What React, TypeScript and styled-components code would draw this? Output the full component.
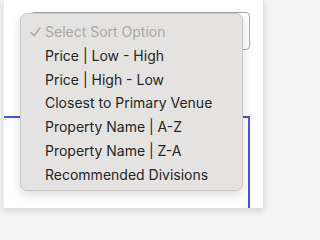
import styled, { createGlobalStyle } from 'styled-components';

const GlobalStyle = createGlobalStyle`
	html, body {
		margin: 0;
		padding: 0;
		background: #f3f3f3;
		font-family: 'Inter', 'Liberation Sans', sans-serif;
	}
	#root {
		width: 270px;
		height: 217px;
		overflow: hidden;
	}
`;

const options = [
	'Price | Low - High',
	'Price | High - Low',
	'Closest to Primary Venue',
	'Property Name | A-Z',
	'Property Name | Z-A',
	'Recommended Divisions',
];

const App = () => {
	return (
		<>
			<GlobalStyle />
			<Card>
				<SelectBox />
				<ResultsPanel />
				<Menu>
					<MenuItem disabled>
						<Check width='11' height='10' viewBox='0 0 11 10'>
							<path d='M1 5.6 L4 8.8 L10 1' fill='none' stroke='#a9a8a6' strokeWidth='1.5' strokeLinecap='round' strokeLinejoin='round' />
						</Check>
						Select Sort Option
					</MenuItem>
					{options.map((option) => (
						<MenuItem key={option}>{option}</MenuItem>
					))}
				</Menu>
			</Card>
		</>
	);
};

const Card = styled.div`
	position: relative;
	margin-left: 3px;
	width: 261px;
	height: 208px;
	background: #ffffff;
	border-right: 1px solid #e2e2e2;
	border-left: 1px solid #ececec;
	box-shadow: 0 3px 6px rgba(0, 0, 0, 0.12);
	padding-top: 12px;
	box-sizing: border-box;
`;

const SelectBox = styled.div`
	margin-left: 26px;
	width: 220px;
	height: 38px;
	box-sizing: border-box;
	border: 1px solid #a9a9a9;
	border-radius: 4px;
	background: #ffffff;
`;

const ResultsPanel = styled.div`
	margin-top: 66px;
	width: 246px;
	height: 92px;
	box-sizing: border-box;
	border-top: 2px solid #4655ee;
	border-right: 2px solid #4655ee;
`;

const Menu = styled.div`
	position: absolute;
	left: 16px;
	top: 13px;
	width: 223px;
	height: 178px;
	box-sizing: border-box;
	padding-top: 6px;
	background: #e4e3e1;
	border: 1px solid #c9c8c6;
	border-radius: 7px;
	box-shadow: 0 4px 10px rgba(0, 0, 0, 0.14);
`;

interface MenuItemProps {
	disabled?: boolean;
}

const MenuItem = styled.div<MenuItemProps>`
	position: relative;
	height: 23.8px;
	line-height: 23.8px;
	padding-left: 24px;
	font-size: 14px;
	color: ${(props) => (props.disabled ? '#a9a8a6' : '#262626')};
	white-space: nowrap;
`;

const Check = styled.svg`
	position: absolute;
	left: 9px;
	top: 7px;
`;

export default App;
